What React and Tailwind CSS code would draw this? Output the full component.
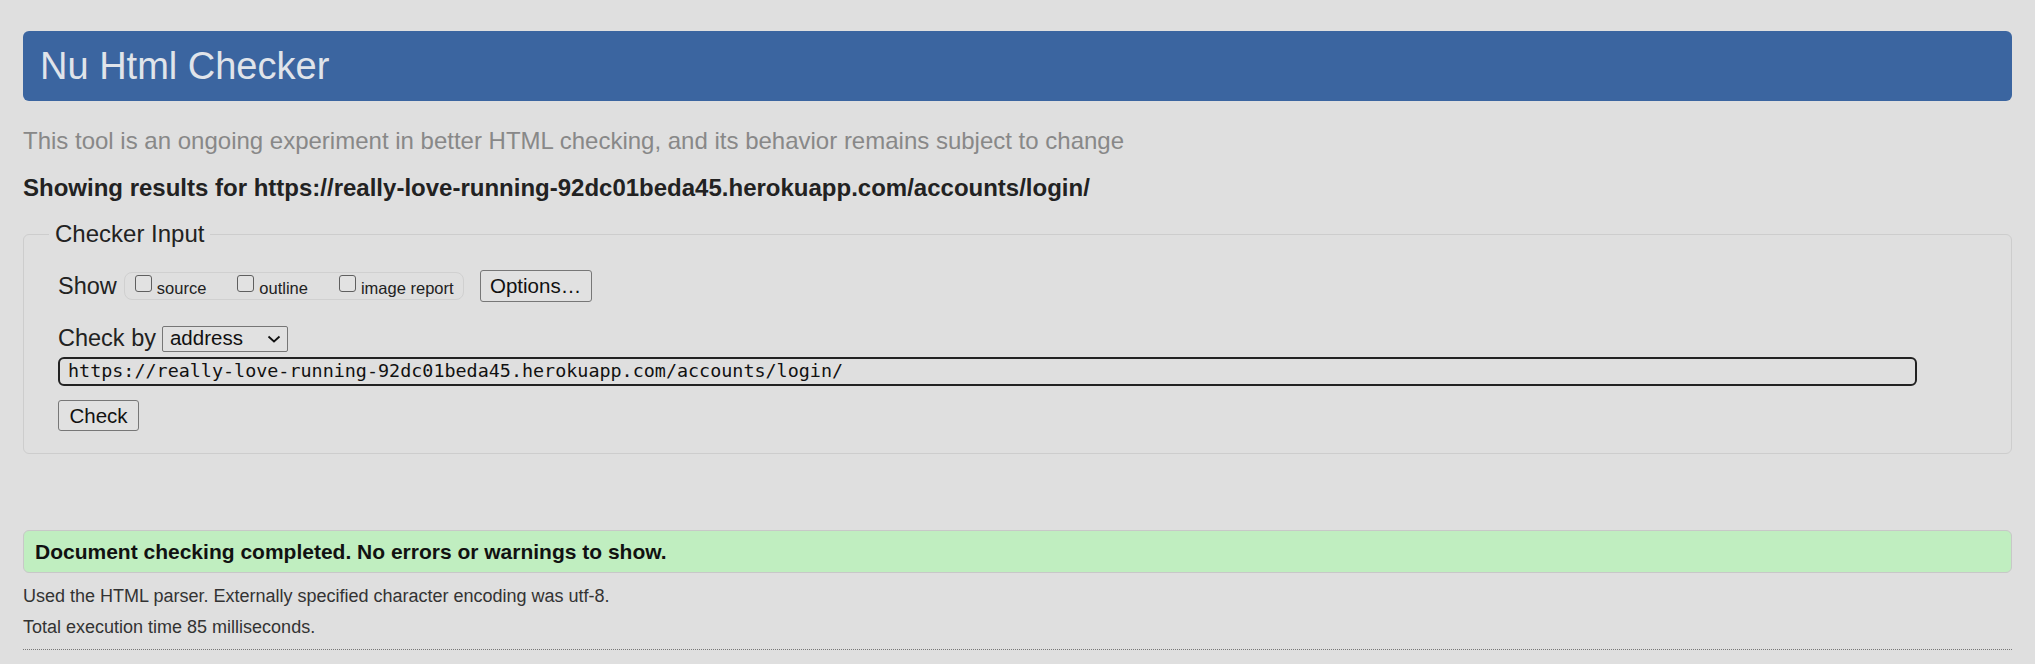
import React from "react";

const url = "https://really-love-running-92dc01beda45.herokuapp.com/accounts/login/";

function Box({ label }) {
  return (
    <label className="flex items-start">
      <span className="mt-[2px] w-[17px] h-[17px] border border-[#5f5f5f] rounded-[3px] bg-[#e2e2e2]" />
      <span className="ml-[5px] mt-[5px] text-[16.5px] leading-[20px] text-[#222]">{label}</span>
    </label>
  );
}

export default function App() {
  return (
    <div className="min-h-screen bg-[#dfdfdf] px-[23px] pt-[31px] pb-[16px] text-[#222] font-['Liberation_Sans',Arial,sans-serif]">
      {/* header */}
      <div className="h-[70px] bg-[#3b65a0] rounded-[6px] flex items-center px-[17px]">
        <h1 className="text-[38px] leading-none text-[#e0e4ea] font-normal">Nu Html Checker</h1>
      </div>

      <p className="mt-[26px] text-[24px] leading-[28px] text-[#888]">
        This tool is an ongoing experiment in better HTML checking, and its behavior remains subject to change
      </p>
      <p className="mt-[20px] text-[24px] leading-[26px] font-bold text-[#222]">
        Showing results for {url}
      </p>

      {/* checker input */}
      <fieldset className="mt-[19px] border border-[#cdcdcd] rounded-[6px] pl-[34px] pb-[22px]">
        <legend className="-ml-[9px] px-[6px] text-[24px] leading-[28px]">Checker Input</legend>

        <div className="mt-[22px] flex items-center">
          <span className="text-[23.5px] leading-[32px]">Show</span>
          <div className="ml-[7px] h-[28px] flex items-start gap-[31px] pl-[10px] pr-[9px] border border-[#d0d0d0] rounded-[8px]">
            <Box label="source" />
            <Box label="outline" />
            <Box label="image report" />
          </div>
          <button className="ml-[16px] w-[112px] h-[32px] border border-[#777] rounded-[3px] bg-[#e1e1e1] text-[20.5px] text-[#111]">
            Options…
          </button>
        </div>

        <div className="mt-[23px] flex items-center">
          <span className="text-[23.5px] leading-[27px]">Check by</span>
          <div className="ml-[6px] w-[126px] h-[26px] flex items-center justify-between pl-[7px] pr-[6px] border border-[#767676] rounded-[2px] bg-[#e1e1e1]">
            <span className="text-[20.5px] leading-none text-[#111]">address</span>
            <svg width="14" height="8" viewBox="0 0 14 8" fill="none">
              <path d="M1.5 1.5 L7 6.5 L12.5 1.5" stroke="#111" strokeWidth="1.8" />
            </svg>
          </div>
        </div>

        <div className="mt-[5px] w-[1859px] h-[29px] border-2 border-[#222] rounded-[6px] flex items-center pl-[8px]">
          <span className="text-[18.4px] leading-none text-[#111] font-['DejaVu_Sans_Mono',monospace]">{url}</span>
        </div>

        <button className="mt-[14px] w-[81px] h-[31px] border border-[#777] rounded-[3px] bg-[#e1e1e1] text-[20.5px] text-[#111]">
          Check
        </button>
      </fieldset>

      {/* result */}
      <div className="mt-[76px] h-[43px] border border-[#c8c8c8] rounded-[6px] bg-[#c0eec0] flex items-center pl-[11px]">
        <p className="text-[21px] font-bold text-[#111]">Document checking completed. No errors or warnings to show.</p>
      </div>

      <p className="mt-[12px] text-[18px] leading-[22px] text-[#333]">
        Used the HTML parser. Externally specified character encoding was utf-8.
      </p>
      <p className="mt-[9px] text-[18px] leading-[22px] text-[#333]">Total execution time 85 milliseconds.</p>
      <hr className="mt-[11px] border-0 border-t border-dotted border-[#777]" />
    </div>
  );
}
